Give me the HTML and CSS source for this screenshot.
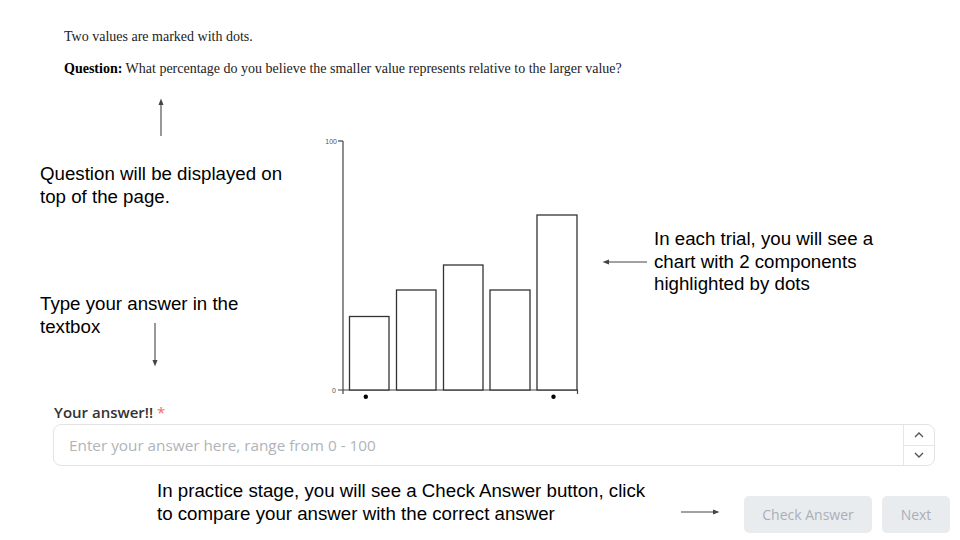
FILE: index.html
```html
<!DOCTYPE html>
<html>
<head>
<meta charset="utf-8">
<link rel="stylesheet" href="styles.css">
</head>
<body>
<div class="page">
  <div class="intro">
    <p class="line">Two values are marked with dots.</p>
    <p class="line q"><b>Question:</b> What percentage do you believe the smaller value represents relative to the larger value?</p>
  </div>

  <div class="chart-wrap">
    <svg class="chart" width="265" height="271" viewBox="0 0 265 271">
      <g class="axis">
        <line x1="23" y1="11" x2="23" y2="264"/>
        <line x1="18" y1="11" x2="23" y2="11"/>
        <line x1="18" y1="260" x2="258" y2="260"/>
        <line x1="257.5" y1="260" x2="257.5" y2="264"/>
      </g>
      <text class="tick" x="17" y="13.5" text-anchor="end">100</text>
      <text class="tick" x="16" y="262.5" text-anchor="end">0</text>
      <g class="bars">
        <rect x="29.5" y="186.5" width="39.5" height="73.5"/>
        <rect x="76.5" y="160" width="39.5" height="100"/>
        <rect x="123.5" y="135" width="39.5" height="125"/>
        <rect x="170" y="160" width="40" height="100"/>
        <rect x="217" y="85" width="40" height="175"/>
      </g>
      <circle cx="45.8" cy="266.7" r="2.2"/>
      <circle cx="233.5" cy="266.7" r="2.2"/>
    </svg>
  </div>

  <div class="form">
    <label class="label">Your answer!! <span class="req">*</span></label>
    <div class="input">
      <span class="placeholder">Enter your answer here, range from 0 - 100</span>
      <div class="spin">
        <div class="spin-btn"><svg width="12" height="8" viewBox="0 0 12 8"><path d="M2 6 L6 2 L10 6" /></svg></div>
        <div class="spin-btn"><svg width="12" height="8" viewBox="0 0 12 8"><path d="M2 2 L6 6 L10 2" /></svg></div>
      </div>
    </div>
  </div>

  <div class="actions">
    <button class="btn btn-check">Check Answer</button>
    <button class="btn btn-next">Next</button>
  </div>
</div>

<div class="note note-q">Question will be displayed on<br>top of the page.</div>
<div class="note note-type">Type your answer in the<br>textbox</div>
<div class="note note-trial">In each trial, you will see a<br>chart with 2 components<br>highlighted by dots</div>
<div class="note note-practice">In practice stage, you will see a Check Answer button, click<br>to compare your answer with the correct answer</div>

<svg class="arrow arrow-up" width="10" height="40" viewBox="0 0 10 40"><line x1="5" y1="5" x2="5" y2="38"/><path d="M2.5 7 L5 0.5 L7.5 7 Z"/></svg>
<svg class="arrow arrow-down" width="10" height="44" viewBox="0 0 10 44"><line x1="5" y1="0" x2="5" y2="38"/><path d="M2.5 37 L5 43.5 L7.5 37 Z"/></svg>
<svg class="arrow arrow-left" width="46" height="10" viewBox="0 0 46 10"><line x1="6" y1="5" x2="45" y2="5"/><path d="M7 2.5 L0.5 5 L7 7.5 Z"/></svg>
<svg class="arrow arrow-right" width="40" height="10" viewBox="0 0 40 10"><line x1="0" y1="5" x2="33" y2="5"/><path d="M32 2.5 L38.5 5 L32 7.5 Z"/></svg>
</body>
</html>
```

FILE: styles.css
```css
html, body {
  margin: 0;
  padding: 0;
  background: #fff;
}
body {
  width: 960px;
  height: 540px;
  position: relative;
  overflow: hidden;
}
.page {
  display: flex;
  flex-direction: column;
}
.intro {
  padding: 29px 0 0 64px;
  font-family: "Liberation Serif", "Times New Roman", serif;
  font-size: 14px;
  color: #222;
}
.line {
  margin: 0;
  line-height: 16px;
}
.line.q {
  margin-top: 16px;
}
.line b {
  color: #000;
}
.chart-wrap {
  margin: 53px 0 0 320px;
  height: 271px;
}
.chart {
  display: block;
}
.axis line {
  stroke: #444;
  stroke-width: 1.2;
}
.tick {
  font-family: "Liberation Sans", Arial, sans-serif;
  font-size: 7px;
  fill: #555;
}
.bars rect {
  fill: #fff;
  stroke: #333;
  stroke-width: 1.3;
}
.chart circle {
  fill: #000;
}
.form {
  margin: 0 25px 0 53px;
  font-family: "Open Sans", "Noto Sans", sans-serif;
  display: flex;
  flex-direction: column;
  gap: 2px;
}
.label {
  font-size: 15px;
  font-weight: 600;
  color: #333;
  line-height: 20px;
  margin-top: 1px;
  padding-left: 1px;
}
.req {
  color: #f26b6b;
  font-weight: 400;
}
.input {
  height: 42px;
  box-sizing: border-box;
  border: 1px solid #e3e3e3;
  border-radius: 8px;
  display: flex;
  align-items: center;
}
.placeholder {
  flex: 1;
  padding-left: 15px;
  font-size: 15.3px;
  color: #b0b4b9;
}
.spin {
  width: 30px;
  height: 100%;
  border-left: 1px solid #e6e6e6;
  display: flex;
  flex-direction: column;
}
.spin-btn {
  flex: 1;
  display: flex;
  align-items: center;
  justify-content: center;
}
.spin-btn + .spin-btn {
  border-top: 1px solid #e6e6e6;
}
.spin-btn path {
  fill: none;
  stroke: #555;
  stroke-width: 1.4;
}
.actions {
  display: flex;
  justify-content: flex-end;
  gap: 10px;
  margin: 30px 10px 0 0;
}
.btn {
  border: none;
  border-radius: 5px;
  background: #e9ecef;
  color: #a9afb6;
  font-family: "Open Sans", "Noto Sans", sans-serif;
  font-size: 14px;
  height: 37px;
  padding: 0;
}
.btn-check {
  width: 128px;
}
.btn-next {
  width: 68px;
}
.note {
  position: absolute;
  font-family: "Liberation Sans", Arial, sans-serif;
  font-size: 18.7px;
  line-height: 23px;
  color: #000;
  white-space: nowrap;
}
.note-q { left: 40px; top: 162px; }
.note-type { left: 40px; top: 292px; }
.note-trial { left: 654px; top: 228px; line-height: 22.5px; }
.note-practice { left: 157px; top: 479px; }
.arrow {
  position: absolute;
}
.arrow line {
  stroke: #444;
  stroke-width: 1.1;
}
.arrow path {
  fill: #444;
}
.arrow-up { left: 156px; top: 98px; }
.arrow-down { left: 150px; top: 323px; }
.arrow-left { left: 602px; top: 257px; }
.arrow-right { left: 681px; top: 507px; }
```
